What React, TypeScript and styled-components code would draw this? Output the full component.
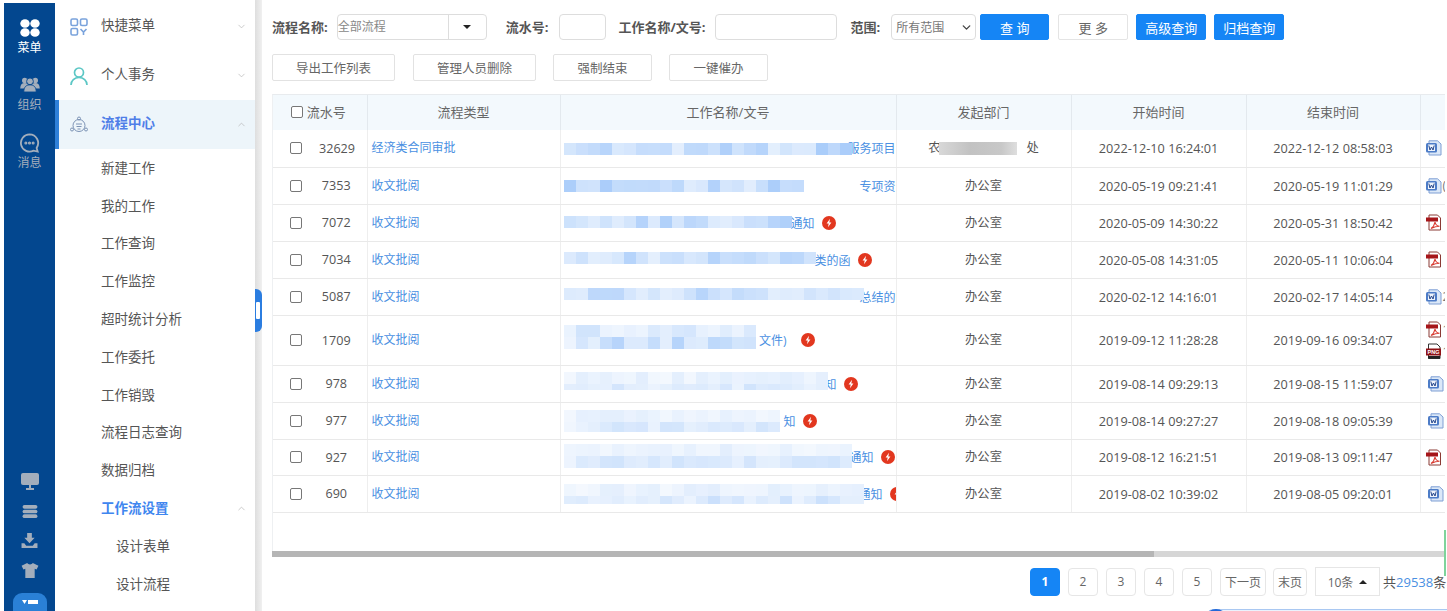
import React from "react";
import styled, { createGlobalStyle } from "styled-components";
import { ChevronDown, ChevronUp } from "lucide-react";

const Global = createGlobalStyle`
  html, body { margin: 0; padding: 0; height: 100%; background: #fff; overflow: hidden; }
  #root { height: 100%; }
  * { box-sizing: border-box; }
  body { font-family: "Open Sans", "Noto Sans CJK SC", sans-serif; color: #555; }
`;

const Page = styled.div`
  display: flex; width: 1447px; height: 611px; padding-left: 4px; overflow: hidden; position: relative;
`;
const Rail = styled.nav`
  width: 51px; flex: none; margin-top: 3px; background: #03478f; display: flex; flex-direction: column; align-items: center; padding-top: 16px; gap: 21px;
`;
const RailItem = styled.div<{ $active?: boolean; $gap: number }>`
  display: flex; flex-direction: column; align-items: center; width: 100%;
  font-size: 12px; line-height: 14px; color: ${p => (p.$active ? "#fff" : "#a3aebc")};
  svg { display: block; margin-bottom: ${p => p.$gap}px; }
`;
const RailBottom = styled.div`
  margin-top: auto; display: flex; flex-direction: column; align-items: center; gap: 15px;
`;
const RailPill = styled.div`
  width: 34px; height: 18px; border-radius: 9px 9px 0 0; background: #2a80d6; display: flex; align-items: center; justify-content: center;
`;
const Side = styled.aside`
  width: 200px; flex: none; background: #fff; padding-top: 2px; overflow: hidden;
`;
const SideHead = styled.div<{ $active?: boolean }>`
  height: 49px; display: flex; align-items: center; padding: 0 8px 0 ${p => (p.$active ? "11px" : "15px")};
  font-size: 13.5px; color: ${p => (p.$active ? "#4f7ee8" : "#555")}; font-weight: ${p => (p.$active ? 700 : 400)};
  background: ${p => (p.$active ? "#edf5fa" : "#fff")};
  border-left: ${p => (p.$active ? "4px solid #2f80d8" : "none")};
  span { margin-left: 13px; flex: 1; position: relative; top: -1px; line-height: 16px; padding-bottom: 2px; }
`;
const SubItem = styled.div<{ $level?: number; $active?: boolean }>`
  height: 37.8px; display: flex; align-items: center; font-size: 13.5px;
  padding: 0 8px 0 ${p => (p.$level === 2 ? "61px" : "46px")};
  color: ${p => (p.$active ? "#3f86ef" : "#555")}; font-weight: ${p => (p.$active ? 700 : 400)};
  span { flex: 1; padding-bottom: 2px; }
`;
const Splitter = styled.div`
  width: 7px; flex: none; background: linear-gradient(90deg, #dedede, #f0f0f0); position: relative;
`;
const Handle = styled.div`
  position: absolute; left: 0; top: 289px; width: 7px; height: 43px; background: #2b7de0; border-radius: 0 6px 6px 0;
  &::after { content: ""; position: absolute; left: 1px; top: 13px; width: 4px; height: 17px; background: #fff; border-radius: 1px; }
`;
const Main = styled.main`
  flex: 1; min-width: 0; padding: 14px 0 0 10px; overflow: hidden; position: relative;
`;
const FilterBar = styled.div`
  display: flex; align-items: center; height: 26px; font-size: 13px; white-space: nowrap;
`;
const Label = styled.label<{ $ml?: number }>`
  font-weight: 700; color: #555; margin-left: ${p => p.$ml ?? 0}px; font-size: 13px; line-height: 1;
`;
const Combo = styled.div`
  width: 150px; height: 26px; margin-left: 9px; border: 1px solid #ddd; border-radius: 4px; display: flex; color: #888;
`;
const ComboText = styled.div`
  flex: 1; line-height: 24px; border-right: 1px solid #ddd; font-size: 12px;
`;
const ComboCaret = styled.div`
  width: 37px; display: flex; align-items: center; justify-content: center;
  &::after { content: ""; border: 4px solid transparent; border-top: 4px solid #222; margin-top: 4px; }
`;
const TextInput = styled.div<{ $w: number; $ml: number }>`
  width: ${p => p.$w}px; height: 26px; border: 1px solid #ddd; border-radius: 4px; margin-left: ${p => p.$ml}px;
`;
const RangeSelect = styled.div`
  width: 85px; height: 26px; margin-left: 11px; border: 1px solid #ddd; border-radius: 4px; display: flex; align-items: center;
  justify-content: space-between; padding: 0 2px 0 4px; color: #777; font-size: 12px;
`;
const Btn = styled.button<{ $w: number; $primary?: boolean; $ml: number }>`
  width: ${p => p.$w}px; height: 26px; margin-left: ${p => p.$ml}px; padding: 0; font: inherit; font-size: 13px;
  border-radius: 2px; border: 1px solid ${p => (p.$primary ? "#1585f5" : "#e4e4e4")};
  background: ${p => (p.$primary ? "#1585f5" : "#fff")}; color: ${p => (p.$primary ? "#fff" : "#666")};
`;
const ActionBar = styled.div`
  display: flex; gap: 17px; margin-top: 14px;
`;
const ActionBtn = styled.button<{ $w: number; $mr?: number }>`
  width: ${p => p.$w}px; height: 27px; margin-right: ${p => p.$mr ?? 0}px; padding: 0; background: #fff; border: 1px solid #e2e2e2; border-radius: 2px; color: #666; font: inherit; font-size: 12.5px;
`;
const TableWrap = styled.div`
  margin-top: 13px; width: 1173px; height: 463px; border-top: 1px solid #e8ebee; border-left: 1px solid #eef0f2; overflow: hidden; position: relative;
`;
const Table = styled.table`
  border-collapse: collapse; table-layout: fixed; width: 1173px; font-size: 12px; color: #555;
`;
const Th = styled.th`
  height: 35px; padding: 0 0 2px; font-weight: 400; background: #f3f9fd; border-right: 1px solid #e3e9ee; color: #666; font-size: 13px; white-space: nowrap;
`;
const Td = styled.td<{ $left?: boolean; $size?: number }>`
  padding: 0 0 ${p => (p.$left || p.$size ? 2 : 0)}px; border-right: 1px solid #eee; border-bottom: 1px solid #e9e9e9; text-align: ${p => (p.$left ? "left" : "center")};
  white-space: nowrap; overflow: hidden; position: relative; color: #555; font-size: ${p => p.$size ?? 12.7}px;
`;
const Tr = styled.tr<{ $h: number }>`
  height: ${p => p.$h}px;
`;
const CheckBox = styled.span`
  display: block; width: 12px; height: 12px; border: 1px solid #777; border-radius: 2px; background: #fff; flex: none;
`;
const SerialCell = styled.div`
  display: grid; grid-template-columns: 29px 1fr; align-items: center; padding: 0 13px 0 17px;
`;
const SerialNo = styled.span`
  text-align: center; font-size: 12.6px;
`;
const HeadCheck = styled.div`
  display: flex; align-items: center; justify-content: center; gap: 4px; padding-right: 3px;
`;
const Link = styled.a`
  color: #4a90e2; padding-left: 4px; font-size: 12px;
`;
const TitleCell = styled.div<{ $pr: number; $gap: number }>`
  position: relative; height: 30px; display: flex; align-items: center; justify-content: flex-end; margin-right: ${p => p.$pr}px; color: #4a90e2; font-size: 12px; gap: ${p => p.$gap}px;
`;
const Mosaic = styled.div<{ $w: number; $h: number; $top: number }>`
  position: absolute; left: 3px; top: ${p => p.$top}px; width: ${p => p.$w}px; height: ${p => p.$h}px;
  display: flex; flex-wrap: wrap; overflow: hidden;
`;
const Tile = styled.i`
  flex: 0 0 12px; height: 12px; display: block;
`;
const Pager = styled.div`
  position: absolute; left: 1030px; top: 567px; display: flex; align-items: center; font-size: 13px; white-space: nowrap; color: #555;
`;
const PageBtn = styled.div<{ $active?: boolean; $w?: number; $mr?: number }>`
  width: ${p => p.$w ?? 30}px; height: 28px; margin-right: ${p => p.$mr ?? 8}px; border-radius: 4px; display: flex; align-items: center; justify-content: center;
  border: 1px solid ${p => (p.$active ? "#1585f5" : "#e6e6e6")}; background: ${p => (p.$active ? "#1585f5" : "#fff")};
  color: ${p => (p.$active ? "#fff" : "#666")}; font-weight: ${p => (p.$active ? 700 : 400)}; font-size: 12px;
`;
const SizeBtn = styled.div`
  width: 65px; height: 29px; border: 1px solid #e6e6e6; margin-right: 3px; display: flex; align-items: center; justify-content: center; gap: 6px; color: #666; font-size: 12px;
  &::after { content: ""; border: 4px solid transparent; border-bottom: 4px solid #222; margin-bottom: 4px; }
`;
const Total = styled.b`
  color: #4a90e2; font-weight: 400;
`;
const ScrollTrack = styled.div`
  position: absolute; left: 272px; top: 551px; width: 1172px; height: 6px; background: #d6d6d6;
  &::before { content: ""; display: block; width: 882px; height: 6px; background: #b5b5b5; }
`;
const CornerGreen = styled.div`
  position: absolute; left: 1444px; top: 530px; width: 2px; height: 46px; background: #7fd39b;
`;
const CornerBlue = styled.div`
  position: absolute; left: 1204px; top: 609px; width: 250px; height: 20px; background: #eaf2fd; border: 1px solid #a9c8f2; border-radius: 10px 0 0 0;
  &::before { content: ""; position: absolute; left: -1px; top: -1px; width: 24px; height: 12px; background: #2368d8; border-radius: 12px 12px 0 0; }
`;
const Bolt = styled.svg`
  width: 14px; height: 14px; flex: none; display: inline-block;
`;
const FileStack = styled.div`
  display: flex; flex-direction: column; gap: 5px; padding-left: 4px; align-items: flex-start; overflow: hidden;
`;
const FileLine = styled.div<{ $shift?: boolean }>`
  display: flex; align-items: center; gap: 1px; padding-left: ${p => (p.$shift ? 2 : 0)}px; font-size: 12px; color: #777;
  svg { flex: none; display: block; }
`;
const RedactBlock = styled.span`
  position: absolute; left: 42px; top: 12px; width: 78px; height: 13px;
  background: linear-gradient(90deg, #d8d8d8, #c2c2c2 40%, #c8c8c8 80%, #dedede);
`;

const Lightning = () => (
  <Bolt viewBox="0 0 14 14"><circle cx="7" cy="7" r="7" fill="#e2371f" /><path d="M8 2.8 4.6 7.6h2.1L6 11.2l3.4-4.8H7.3z" fill="#fff" /></Bolt>
);
const WordIcon = () => (
  <svg width="17" height="16" viewBox="0 0 17 16">
    <path d="M4 .8h8.500L16 4v11H4z" fill="#dbe8f8" stroke="#7e9fd4" />
    <rect x="1" y="3" width="11" height="9.500" rx="1.500" fill="#4d7cc7" />
    <rect x="3" y="4.500" width="7" height="6.500" fill="#eef4fc" />
    <path d="M3.800 5.500l1.200 4.500 1.500-3 1.500 3 1.200-4.500" fill="none" stroke="#23468c" strokeWidth="1" />
  </svg>
);
const PdfIcon = () => (
  <svg width="17" height="17" viewBox="0 0 17 17">
    <path d="M4 1h8.500L15.500 4v12H4z" fill="#fff" stroke="#8a3a34" />
    <rect x="1" y="3.500" width="12" height="4" fill="#a6161a" />
    <path d="M6 14.500c2.500-1.500 3.500-4 4-6.500.5 2.500 2 4 4.500 4.200-3 0-5.500.8-8.500 2.300z" fill="none" stroke="#d83a30" strokeWidth="1.100" />
  </svg>
);
const PngIcon = () => (
  <svg width="17" height="16" viewBox="0 0 17 16">
    <path d="M3.500 1h8.500l3 3v11.500H3.500z" fill="#fff" stroke="#333" />
    <rect x="1" y="5.500" width="15" height="7" fill="#8f1216" />
    <rect x="3" y="13" width="12" height="2.500" fill="#222" />
    <text x="8.500" y="11" fontSize="5.500" fontWeight="700" textAnchor="middle" fill="#fff" fontFamily="Liberation Sans">PNG</text>
  </svg>
);

const tiles = (w: number, h: number, seed: number, light: number, range: number) => {
  const cols = Math.ceil(w / 12);
  const lines = Math.ceil(h / 12);
  return Array.from({ length: cols * lines }, (_, i) => {
    const v = Math.abs(Math.sin((i + 1) * 12.9898 + seed * 78.233) * 43758.5453) % 1;
    const line = Math.floor(i / cols);
    const a = (light + v * range) * (lines > 1 && line === 0 ? 0.6 : 1);
    const mix = (c: number) => Math.round(255 + (c - 255) * a);
    return `rgb(${mix(120)},${mix(175)},${mix(247)})`;
  });
};

const rows = [
  { id: "32629", type: "经济类合同审批", tail: "服务项目", pr: 0, gap: 7, bolt: false, dept: "农　　　　　　　处", start: "2022-12-10 16:24:01", end: "2022-12-12 08:58:03", h: 37, mw: 288, mh: 12, mt: 10, light: .2, range: .45, files: "w" },
  { id: "7353", type: "收文批阅", tail: "专项资", pr: 0, gap: 7, bolt: false, dept: "办公室", start: "2020-05-19 09:21:41", end: "2020-05-19 11:01:29", h: 37, mw: 240, mh: 12, mt: 9, light: .2, range: .45, files: "w", extra: "(" },
  { id: "7072", type: "收文批阅", tail: "通知", pr: 60, gap: 7, bolt: true, dept: "办公室", start: "2020-05-09 14:30:22", end: "2020-05-31 18:50:42", h: 37, mw: 236, mh: 12, mt: 8, light: .2, range: .4, files: "p" },
  { id: "7034", type: "收文批阅", tail: "类的函", pr: 24, gap: 7, bolt: true, dept: "办公室", start: "2020-05-08 14:31:05", end: "2020-05-11 10:06:04", h: 37, mw: 262, mh: 12, mt: 7, light: .2, range: .35, files: "p" },
  { id: "5087", type: "收文批阅", tail: "总结的", pr: 0, gap: 7, bolt: false, dept: "办公室", start: "2020-02-12 14:16:01", end: "2020-02-17 14:05:14", h: 37, mw: 302, mh: 12, mt: 6, light: .2, range: .35, files: "w", extra: "2" },
  { id: "1709", type: "收文批阅", tail: "文件)", pr: 81, gap: 14, bolt: true, dept: "办公室", start: "2019-09-12 11:28:28", end: "2019-09-16 09:34:07", h: 50, mw: 199, mh: 24, mt: 0, light: .18, range: .4, files: "pn", extra: "1" },
  { id: "978", type: "收文批阅", tail: "知", pr: 38, gap: 7, bolt: true, dept: "办公室", start: "2019-08-14 09:29:13", end: "2019-08-15 11:59:07", h: 37, mw: 266, mh: 18, mt: 3, light: .14, range: .22, files: "s" },
  { id: "977", type: "收文批阅", tail: "知", pr: 79, gap: 7, bolt: true, dept: "办公室", start: "2019-08-14 09:27:27", end: "2019-08-18 09:05:39", h: 37, mw: 224, mh: 22, mt: 4, light: .16, range: .18, files: "s" },
  { id: "927", type: "收文批阅", tail: "通知", pr: 1, gap: 7, bolt: true, dept: "办公室", start: "2019-08-12 16:21:51", end: "2019-08-13 09:11:47", h: 36, mw: 296, mh: 24, mt: 2, light: .15, range: .2, files: "p" },
  { id: "690", type: "收文批阅", tail: "通知", pr: -8, gap: 7, bolt: true, dept: "办公室", start: "2019-08-02 10:39:02", end: "2019-08-05 09:20:01", h: 37, mw: 302, mh: 20, mt: 5, light: .14, range: .25, files: "s" },
];

export default function App() {
  return (
    <Page>
      <Global />
      <Rail>
        <RailItem $active $gap={4}>
          <svg width="20" height="18" viewBox="0 0 20 18" fill="#fff">
            <ellipse cx="5" cy="4.500" rx="4.700" ry="4.300" /><ellipse cx="15" cy="4.500" rx="4.700" ry="4.300" /><ellipse cx="5" cy="13.500" rx="4.700" ry="4.300" /><ellipse cx="15" cy="13.500" rx="4.700" ry="4.300" />
          </svg>
          菜单
        </RailItem>
        <RailItem $gap={6}>
          <svg width="20" height="16" viewBox="0 0 22 18" fill="#a3aebc">
            <circle cx="5" cy="5" r="3" /><circle cx="17" cy="5" r="3" /><path d="M0 14c0-4 2-6 5-6s5 2 5 6z" /><path d="M12 14c0-4 2-6 5-6s5 2 5 6z" />
            <circle cx="11" cy="6" r="3.800" stroke="#03478f" /><path d="M4 18c0-6 3-8 7-8s7 2 7 8z" stroke="#03478f" />
          </svg>
          组织
        </RailItem>
        <RailItem $gap={3}>
          <svg width="21" height="20" viewBox="0 0 22 22" fill="none" stroke="#a3aebc" strokeWidth="2">
            <path d="M11 1.500a9.500 9.500 0 1 0 4.500 17.900l4.500 1-1.200-4A9.500 9.500 0 0 0 11 1.500z" />
            <circle cx="7" cy="11" r=".7" /><circle cx="11" cy="11" r=".7" /><circle cx="15" cy="11" r=".7" />
          </svg>
          消息
        </RailItem>
        <RailBottom>
          <svg width="18" height="17" viewBox="0 0 18 17" fill="#a3aebc"><rect width="18" height="12" rx="2" /><path d="M5 15h8v2H5zM8 12h2v3H8z" /></svg>
          <svg width="16" height="13" viewBox="0 0 16 14" fill="#a3aebc"><rect width="16" height="4" rx="2" /><rect y="5" width="16" height="4" rx="2" /><rect y="10" width="16" height="4" rx="2" /></svg>
          <svg width="17" height="15" viewBox="0 0 17 16" fill="#a3aebc"><path d="M6 0h5v5h3l-5.500 6L3 5h3zM0 11h3l2 2.500h7l2-2.500h3v5H0z" /></svg>
          <svg width="18" height="15" viewBox="0 0 18 16" fill="#a3aebc"><path d="M6 0c1 2 5 2 6 0l6 3-2 4-2-1v10H4V6L2 7 0 3z" /></svg>
          <RailPill>
            <svg width="16" height="5" viewBox="0 0 16 5" fill="#fff"><path d="M0 0h5L2.500 4zM6 0h10v4H6z" /></svg>
          </RailPill>
        </RailBottom>
      </Rail>
      <Side>
        <SideHead>
          <svg width="18" height="18" viewBox="0 0 18 18" fill="none" stroke="#7aa3dc" strokeWidth="1.600">
            <rect x="1" y="1" width="6.500" height="6.500" rx="1.500" /><rect x="10.500" y="1" width="6.500" height="6.500" rx="1.500" /><rect x="1" y="10.500" width="6.500" height="6.500" rx="1.500" /><path d="M10.500 11l3 3 3-3M13.500 14v3" />
          </svg>
          <span>快捷菜单</span><ChevronDown size={11} color="#b5b5b5" strokeWidth={1.500} />
        </SideHead>
        <SideHead>
          <svg width="18" height="18" viewBox="0 0 18 18" fill="none" stroke="#5cc7c5" strokeWidth="1.700">
            <circle cx="9" cy="5.500" r="4.500" /><path d="M1 18c0-4.500 3.500-7.500 8-7.500s8 3 8 7.500" />
          </svg>
          <span>个人事务</span><ChevronDown size={11} color="#b5b5b5" strokeWidth={1.500} />
        </SideHead>
        <SideHead $active>
          <svg width="18" height="18" viewBox="0 0 18 18" fill="none" stroke="#7c93b5" strokeWidth="1">
            <circle cx="9" cy="9.500" r="6" /><circle cx="9" cy="2.500" r="1.500" /><circle cx="2" cy="13.500" r="1.500" /><circle cx="16" cy="13.500" r="1.500" /><path d="M6 8h6M6.500 10.500h5M7.500 13h3" />
          </svg>
          <span>流程中心</span><ChevronUp size={11} color="#b5b5b5" strokeWidth={1.500} />
        </SideHead>
        {["新建工作", "我的工作", "工作查询", "工作监控", "超时统计分析", "工作委托", "工作销毁", "流程日志查询", "数据归档"].map(t => (
          <SubItem key={t}><span>{t}</span></SubItem>
        ))}
        <SubItem $active><span>工作流设置</span><ChevronUp size={11} color="#b5b5b5" strokeWidth={1.500} /></SubItem>
        <SubItem $level={2}><span>设计表单</span></SubItem>
        <SubItem $level={2}><span>设计流程</span></SubItem>
      </Side>
      <Splitter><Handle /></Splitter>
      <Main>
        <FilterBar>
          <Label>流程名称:</Label>
          <Combo><ComboText>全部流程</ComboText><ComboCaret /></Combo>
          <Label $ml={19}>流水号:</Label>
          <TextInput $w={47} $ml={11} />
          <Label $ml={12}>工作名称/文号:</Label>
          <TextInput $w={122} $ml={9} />
          <Label $ml={14}>范围:</Label>
          <RangeSelect>所有范围<ChevronDown size={13} color="#444" strokeWidth={2.500} /></RangeSelect>
          <Btn $primary $w={69} $ml={4}>查 询</Btn>
          <Btn $w={70} $ml={9}>更 多</Btn>
          <Btn $primary $w={70} $ml={8}>高级查询</Btn>
          <Btn $primary $w={70} $ml={8}>归档查询</Btn>
        </FilterBar>
        <ActionBar>
          <ActionBtn $w={123} $mr={1}>导出工作列表</ActionBtn>
          <ActionBtn $w={123}>管理人员删除</ActionBtn>
          <ActionBtn $w={99}>强制结束</ActionBtn>
          <ActionBtn $w={99}>一键催办</ActionBtn>
        </ActionBar>
        <TableWrap>
          <Table>
            <colgroup>
              <col width="94" /><col width="193" /><col width="336" /><col width="175" /><col width="175" /><col width="174" /><col width="26" />
            </colgroup>
            <thead>
              <tr>
                <Th><HeadCheck><CheckBox />流水号</HeadCheck></Th>
                <Th>流程类型</Th><Th>工作名称/文号</Th><Th>发起部门</Th><Th>开始时间</Th><Th>结束时间</Th><Th />
              </tr>
            </thead>
            <tbody>
              {rows.map((r, i) => (
                <Tr key={r.id} $h={r.h}>
                  <Td><SerialCell><CheckBox /><SerialNo>{r.id}</SerialNo></SerialCell></Td>
                  <Td $left><Link>{r.type}</Link></Td>
                  <Td>
                    <TitleCell $pr={r.pr} $gap={r.gap}>
                      {r.tail}{r.bolt && <Lightning />}
                      <Mosaic $w={r.mw} $h={r.mh} $top={r.mt}>
                        {tiles(r.mw, r.mh, i + 1, r.light, r.range).map((c, k) => <Tile key={k} style={{ background: c }} />)}
                      </Mosaic>
                    </TitleCell>
                  </Td>
                  <Td $size={12.3}>{r.dept}{i === 0 && <RedactBlock />}</Td>
                  <Td>{r.start}</Td>
                  <Td>{r.end}</Td>
                  <Td>
                    <FileStack>
                      {r.files === "w" && <FileLine><WordIcon />{r.extra}</FileLine>}
                      {r.files === "s" && <FileLine $shift><WordIcon /></FileLine>}
                      {(r.files === "p" || r.files === "pn") && <FileLine><PdfIcon />{r.extra}</FileLine>}
                      {r.files === "pn" && <FileLine><PngIcon />{r.extra}</FileLine>}
                    </FileStack>
                  </Td>
                </Tr>
              ))}
            </tbody>
          </Table>
        </TableWrap>
      </Main>
      <ScrollTrack />
      <Pager>
        <PageBtn $active>1</PageBtn><PageBtn>2</PageBtn><PageBtn>3</PageBtn><PageBtn>4</PageBtn><PageBtn>5</PageBtn>
        <PageBtn $w={46} $mr={7}>下一页</PageBtn><PageBtn $w={34}>末页</PageBtn>
        <SizeBtn>10条</SizeBtn>
        <span>共<Total>29538</Total>条</span>
      </Pager>
      <CornerGreen />
      <CornerBlue />
    </Page>
  );
}
